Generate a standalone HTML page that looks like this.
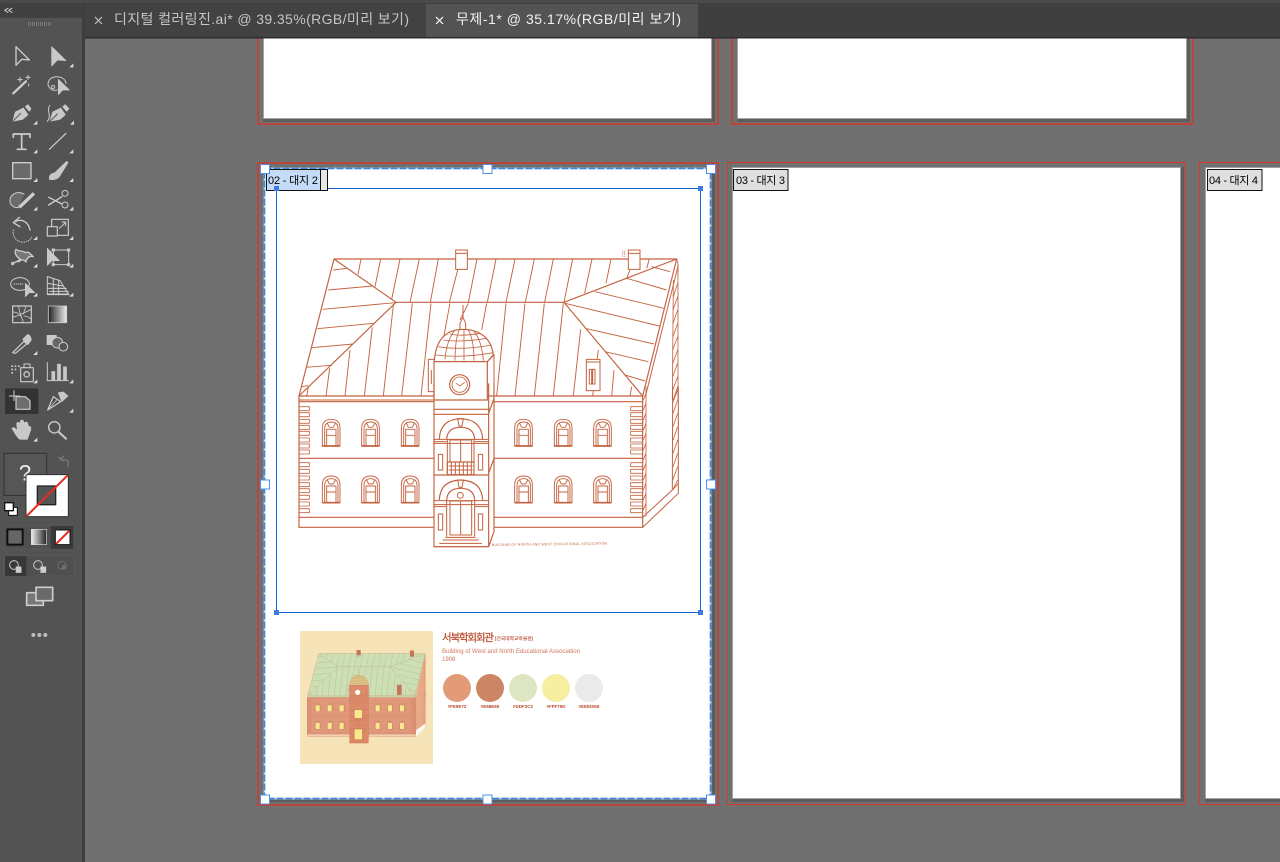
<!DOCTYPE html>
<html><head><meta charset="utf-8"><style>
html,body{margin:0;padding:0;background:#707070;width:1280px;height:862px;overflow:hidden}
svg{display:block}
text{font-family:"Liberation Sans","Noto Sans CJK KR",sans-serif}
.f{fill:var(--f,#fff)}
</style></head><body>
<svg width="1280" height="862" viewBox="0 0 1280 862" xmlns="http://www.w3.org/2000/svg">
<defs>
<linearGradient id="gr" x1="0" x2="1" y1="0" y2="0"><stop offset="0" stop-color="#222"/><stop offset="1" stop-color="#eee"/></linearGradient>
<g id="win" fill="none">
<path d="M97 168V115Q97 88 124 88Q150 88 150 115V168Z"/>
<path d="M104 168V117Q104 96 124 96Q144 96 144 117V168"/>
<path d="M110 168V118H138V168M110 136H138"/>
<path d="M97 168H150" stroke-width="5"/>
<path d="M112 100L118 112M136 100L130 112M118 112H130"/>
</g>
<g id="roof" fill="none">
<path d="M132 57H1160L1058 468H27Z" stroke-width="3.500"/>
<path d="M132 57L318 187H822L1160 57M27 468L318 187M1058 468L822 187" stroke-width="3.500"/>
<path d="M1165 75L1066 470" stroke-width="3"/>
<path d="M213 57L204 103M272 57L255 140M330 57L305 178M388 57L360 187M445 57L421 187M503 90L478 187M561 57L535 187M618 57L592 187M675 57L648 187M733 57L706 187M790 57L764 187M848 57L822 187M906 57L884 160M963 57L948 130M1020 90L1010 115M1078 57L1070 85"/>
<path d="M50 468L55 442M108 468L119 385M165 468L180 330M223 468L247 262M280 468L310 195M335 468L367 190M393 468L423 190M450 350L480 190M535 190L510 240M590 190L575 270M620 468L648 190M675 468L705 190M733 468L763 190M790 468L820 190M850 468L872 268M908 468L925 330M965 468L972 390M1020 468L1025 440"/>
<path d="M130 90L170 85M115 150L247 138M98 208L315 188M82 266L250 250M65 323L190 312M48 382L125 376M33 440L55 437"/>
<path d="M1010 115L1130 150M915 155L1122 205M825 190L1108 258M885 265L1092 312M945 335L1075 365M1005 405L1065 423M1085 80L1140 95"/>
<path class="f" d="M497 30H532V88H497ZM497 40H532" stroke-width="3"/>
<path class="f" d="M1015 30H1050V88H1015ZM1015 40H1050" stroke-width="3"/>
<path d="M998 32V50M1004 32V50" stroke-dasharray="2 2"/>
<path class="f" d="M889 358H930V452H889ZM889 366H930M898 388H905V432H898ZM908 388H915V432H908Z" stroke-width="3"/>
<path class="f" d="M415 358H435V455H415ZM424 390V432" stroke-width="3"/>
<path class="f" d="M433 362Q440 270 518 268Q600 270 610 345L592 365H433Z" stroke-width="3.500"/>
<path d="M436 345Q515 355 610 338M445 320Q515 332 605 315M460 300Q515 308 590 295M480 282Q515 290 570 280M465 358Q470 300 495 270M495 362Q495 300 508 268M522 362V268M552 362Q552 300 535 270M580 362Q575 300 552 275" stroke-width="2.500"/>
<path class="f" d="M519 195V235M510 250L519 232L527 250V268H510Z" stroke-width="3"/>
<path class="f" d="M432 365H592V480H432Z" stroke-width="3.500"/>
<path d="M592 365L612 345V470" stroke-width="3"/>
<circle cx="509" cy="434" r="30" stroke-width="3.500"/><circle cx="509" cy="434" r="23" stroke-width="2.500"/>
<path d="M498 430L510 438L524 427" stroke-width="2.500"/>
<path d="M27 468V480H432M612 468H1060" stroke-width="3"/>
<path d="M1160 57L1164 72V480M1150 120L1147 480" stroke-width="2.500"/>
<path d="M1150 170L1163 130M1149 210L1163 170M1149 250L1163 210M1149 290L1163 250M1148 330L1163 290M1148 370L1163 330M1148 410L1163 370M1148 450L1163 410M1147 490L1163 450" stroke-width="2.500"/>
</g>
<g id="lower" fill="none">
<path d="M27 18V412H432M612 412H1058V18M27 35H432M612 35H1058" stroke-width="3.500"/>
<path d="M27 205H432M612 205H1058M27 382H432M612 382H1058" stroke-width="3.500"/>
<path d="M1058 412L1165 310V-10M1058 382L1147 300M1147 300L1148 -10" stroke-width="3"/>
<path d="M1147 300L1165 280" stroke-width="3"/>
<path d="M1068 -10V380M1060 30L1068 10M1060 60L1068 40M1060 90L1068 70M1060 120L1068 100M1060 150L1068 130M1060 180L1068 160M1060 210L1068 190M1060 240L1068 220M1060 270L1068 250M1060 300L1068 280M1060 330L1068 310M1060 360L1068 340" stroke-width="2.500"/>
<path d="M1150 30L1163 -10M1149 70L1163 30M1149 110L1163 70M1149 150L1163 110M1149 190L1163 150M1149 230L1163 190M1148 270L1163 230M1148 300L1163 270" stroke-width="2.500"/>
<path d="M27 50H58V62H27M27 68H58V80H27M27 88H58V100H27M27 106H58V118H27M27 124H58V136H27M27 144H58V156H27M27 162H58V174H27M27 180H58V192H27M27 218H58V230H27M27 238H58V250H27M27 258H58V270H27M27 278H58V290H27M27 296H58V308H27M27 316H58V328H27M27 336H58V348H27M27 356H58V368H27" stroke-width="2.500"/>
<path d="M1058 50H1022V62H1058M1058 68H1022V80H1058M1058 88H1022V100H1058M1058 106H1022V118H1058M1058 124H1022V136H1058M1058 144H1022V156H1058M1058 162H1022V174H1058M1058 180H1022V192H1058M1058 218H1022V230H1058M1058 238H1022V250H1058M1058 258H1022V270H1058M1058 278H1022V290H1058M1058 296H1022V308H1058M1058 316H1022V328H1058M1058 336H1022V348H1058M1058 356H1022V368H1058" stroke-width="2.500"/>
<use href="#win"/><use href="#win" x="118"/><use href="#win" x="237"/><use href="#win" x="577"/><use href="#win" x="696"/><use href="#win" x="814"/>
<use href="#win" y="170"/><use href="#win" x="118" y="170"/><use href="#win" x="237" y="170"/><use href="#win" x="577" y="170"/><use href="#win" x="696" y="170"/><use href="#win" x="814" y="170"/>
<path d="M432 -20V470H596V-20M596 470L612 425V-20M432 58H596M432 73H596M432 255H596M596 70L612 25M596 250L612 205" stroke-width="3.500"/>
<path d="M448 148Q450 88 512 86Q575 88 578 148M470 148Q472 112 512 112Q552 112 554 148" stroke-width="3.500"/>
<path d="M503 86H520L516 108H507Z" stroke-width="3"/>
<path d="M430 148H596M430 160H596M430 155H470M554 155H596" stroke-width="3"/>
<path d="M472 250V148M552 250V148M480 215V150H545V215M512 150V215" stroke-width="3"/>
<path d="M472 216H552V254H472Z" stroke-width="3.500"/>
<path d="M476 228H548M476 240H548M484 216V254M496 216V254M508 216V254M520 216V254M532 216V254M544 216V254" stroke-width="3"/>
<path d="M445 193H458V240H445ZM565 193H578V240H565Z" stroke-width="3"/>
<path d="M448 330Q450 272 512 270Q575 272 578 330M470 330Q472 295 512 295Q552 295 554 330" stroke-width="3.500"/>
<path d="M503 270H520L516 292H507Z" stroke-width="3"/>
<circle cx="511" cy="316" r="9" stroke-width="3"/>
<path d="M430 332H596M430 344H596M430 350H470M554 350H596" stroke-width="3"/>
<path d="M470 440V330M554 440V330M480 435V333H545V435H480M512 333V435" stroke-width="3"/>
<path d="M445 372H458V420H445ZM565 372H578V420H565Z" stroke-width="3"/>
<path d="M466 442H556M458 450H566M448 460H576M432 470H596" stroke-width="3"/>
</g>
</defs>

<rect width="1280" height="862" fill="#707070"/>

<!-- artboards -->
<g>
<rect x="258" y="20" width="460" height="104" fill="none" stroke="#d0392b" stroke-width="1.500"/>
<rect x="732" y="20" width="461" height="104" fill="none" stroke="#d0392b" stroke-width="1.500"/>
<rect x="263" y="20" width="452" height="102" fill="#5d5d5d"/>
<rect x="737" y="20" width="453" height="102" fill="#5d5d5d"/>
<rect x="263" y="20" width="449" height="99" fill="#a2a2a2"/>
<rect x="737" y="20" width="450" height="99" fill="#a2a2a2"/>
<rect x="264" y="20" width="447" height="98" fill="#fff"/>
<rect x="738" y="20" width="448" height="98" fill="#fff"/>

<rect x="258" y="163" width="460" height="642" fill="none" stroke="#d0392b" stroke-width="1.500"/>
<rect x="727.500" y="162.500" width="458" height="642" fill="none" stroke="#d43a2a" stroke-width="1"/>
<rect x="1199.500" y="162.500" width="100" height="642" fill="none" stroke="#d43a2a" stroke-width="1"/>
<rect x="263" y="167" width="452" height="635" fill="#5d5d5d"/>
<rect x="732" y="167" width="452" height="635" fill="#5d5d5d"/>
<rect x="1205" y="167" width="100" height="635" fill="#5d5d5d"/>
<rect x="732" y="167" width="449" height="632" fill="#a2a2a2"/>
<rect x="1205" y="167" width="100" height="632" fill="#a2a2a2"/>
<rect x="264" y="168" width="447" height="631" fill="#fff"/>
<rect x="733" y="168" width="447" height="630" fill="#fff"/>
<rect x="1206" y="168" width="100" height="630" fill="#fff"/>
</g>

<!-- big building -->
<g transform="translate(290 240) scale(.33333)" stroke="#c4623f" stroke-width="2.800"><use href="#roof"/></g>
<g transform="translate(290 390) scale(.33333)" stroke="#c4623f" stroke-width="2.800"><use href="#lower"/></g>
<text x="492" y="546" font-size="3.400" fill="#bd5334" textLength="115" transform="rotate(-.7 492 546)">BUILDING OF NORTH AND WEST EDUCATIONAL ASSOCIATION</text>

<!-- small artwork -->
<rect x="300" y="631" width="133" height="133" fill="#f6e3b8"/>
<g transform="translate(296 640) scale(.33333)">
<path d="M68 40H388L360 172H33Z" fill="#cbe0b4"/>
<path d="M33 172H360V290H33Z" fill="#e0987a"/>
<path d="M33 283H360V290H33Z" fill="#f3d0b4"/>
<path d="M360 172L388 40V250L360 270Z" fill="#eaa986"/>
<path d="M360 272L388 250V262L360 290Z" fill="#fff"/>
<path d="M160 135H218V310H160Z" fill="#dc8c6a"/>
<path d="M160 135Q165 105 188 105Q212 105 218 135Z" fill="#dcc98c"/>
<path d="M182 30h12v16h-12zM342 32h12v18h-12zM303 135h14v30h-14z" fill="#c8765a"/>
</g>
<g transform="translate(318.700 653.300) scale(.311) translate(-334 -259)" style="--f:none" opacity=".5">
<g transform="translate(290 240) scale(.33333)" stroke="#c4694a" stroke-width="3"><use href="#roof"/></g>
<g transform="translate(290 390) scale(.33333)" stroke="#c4694a" stroke-width="3"><use href="#lower"/></g>
</g>
<g transform="translate(296 640) scale(.33333)">
<path d="M59 196h12v18h-12zM95 196h12v18h-12zM131 196h12v18h-12zM239 196h12v18h-12zM276 196h12v18h-12zM312 196h12v18h-12zM59 249h12v18h-12zM95 249h12v18h-12zM131 249h12v18h-12zM239 249h12v18h-12zM276 249h12v18h-12zM312 249h12v18h-12zM176 210h22v24h-22zM176 268h22v30h-22z" fill="#f7e98c"/>
<circle cx="185" cy="157" r="8" fill="#fff"/>
</g>
<text x="442" y="641" font-size="10.500" fill="#b9492a" stroke="#b9492a" stroke-width=".2" textLength="52">서북학회회관</text>
<text x="495" y="640" font-size="4.800" fill="#b9492a" stroke="#b9492a" stroke-width=".1" textLength="38">[건국대학교박물관]</text>
<text x="442" y="653" font-size="6.100" fill="#d0775a" textLength="138">Building of West and North Educational Association</text>
<text x="442" y="661" font-size="6.100" fill="#d0775a">1908</text>
<circle cx="457" cy="688" r="14" fill="#e39a76"/>
<circle cx="490" cy="688" r="14" fill="#cc8665"/>
<circle cx="523" cy="688" r="14" fill="#dde5c2"/>
<circle cx="556" cy="688" r="14" fill="#f7ef9f"/>
<circle cx="589" cy="688" r="14" fill="#eaeaea"/>
<g font-size="4.500" fill="#b9492a" text-anchor="middle" font-weight="bold">
<text x="457" y="708">#FE9E72</text><text x="490" y="708">#E68E65</text><text x="523" y="708">#DDF3C2</text><text x="556" y="708">#FFF79D</text><text x="589" y="708">#EEEDEB</text>
</g>

<!-- selection -->
<rect x="264.500" y="168.500" width="446" height="630" fill="none" stroke="#c9dff8" stroke-width="2"/>
<rect x="264.500" y="168.500" width="446" height="630" fill="none" stroke="#3b86e0" stroke-width="1.500" stroke-dasharray="7 2"/>
<rect x="276.500" y="188.500" width="424" height="424" fill="none" stroke="#1263d6" stroke-width="1"/>
<!-- labels -->
<rect x="320.500" y="169.500" width="7" height="21" fill="#e6e6e6" stroke="#111"/>
<rect x="266.500" y="169.500" width="54" height="21" fill="#c5dcf8" stroke="#111"/>
<text x="268" y="184" font-size="11" fill="#000" textLength="50">02 - 대지 2</text>
<rect x="733.500" y="169.500" width="54.500" height="21" fill="#e0e0e0" stroke="#111"/>
<text x="736" y="184" font-size="11" fill="#000" textLength="49">03 - 대지 3</text>
<rect x="1207.500" y="169.500" width="54.500" height="21" fill="#e0e0e0" stroke="#111"/>
<text x="1209" y="184" font-size="11" fill="#000" textLength="49">04 - 대지 4</text>
<g fill="#3c7be0">
<rect x="274" y="186" width="5" height="5"/><rect x="698" y="186" width="5" height="5"/><rect x="274" y="610" width="5" height="5"/><rect x="698" y="610" width="5" height="5"/>
</g>
<g fill="#fff" stroke="#4c90e6" stroke-width="1">
<rect x="260.500" y="164.500" width="9" height="9"/><rect x="483" y="164.500" width="9" height="9"/><rect x="706.500" y="164.500" width="9" height="9"/>
<rect x="260.500" y="480" width="9" height="9"/><rect x="706.500" y="480" width="9" height="9"/>
<rect x="260.500" y="795" width="9" height="9"/><rect x="483" y="795" width="9" height="9"/><rect x="706.500" y="795" width="9" height="9"/>
</g>

<!-- tab bar -->
<rect x="83" y="0" width="1197" height="38" fill="#3f3f3f"/>
<rect x="0" y="0" width="1280" height="3" fill="#4a4a4a"/>
<rect x="85" y="4" width="341" height="33" fill="#424242"/>
<rect x="426" y="4" width="272" height="33" fill="#535353"/>
<rect x="85" y="37" width="1195" height="1.500" fill="#2c2c2c"/>
<path d="M95 17L102 24M102 17L95 24" stroke="#c4c4c4" stroke-width="1.200"/>
<path d="M436 17L443 24M443 17L436 24" stroke="#fff" stroke-width="1.200"/>
<text x="114" y="24" font-size="14" fill="#c6c6c6" textLength="295">디지털 컬러링진.ai* @ 39.35%(RGB/미리 보기)</text>
<text x="456" y="24" font-size="14" fill="#f2f2f2" textLength="225">무제-1* @ 35.17%(RGB/미리 보기)</text>

<!-- toolbar -->
<rect x="0" y="3" width="83" height="859" fill="#535353"/>
<rect x="0" y="3" width="83" height="15" fill="#414141"/>
<rect x="82" y="3" width="3" height="859" fill="#3e3e3e"/>
<g transform="scale(.33333)" fill="none" stroke="#cdcdcd" stroke-width="4" stroke-linejoin="round" stroke-linecap="round">
<path d="M24 25L14 31L24 37M36 25L26 31L36 37" stroke-width="3"/>
<path d="M84 72H152" stroke="#8a8a8a" stroke-width="12" stroke-dasharray="2 4" stroke-linecap="butt"/>
<path d="M48 140L88 180L65 178L48 196Z"/>
<path d="M155 140L198 182L172 180L155 198Z" fill="#c8c8c8" stroke-width="2"/>
<path d="M40 280L78 244" stroke-width="7"/>
<path d="M60 232V246M53 239H67M84 226V238M78 232H90M86 252V258" stroke-width="3"/>
<path d="M172 270C150 275 138 255 148 240C160 224 195 228 198 250M155 258a5 5 0 1 0 8 6a5 5 0 1 0-8-6" stroke-width="3"/>
<path d="M175 238L208 270L188 270L175 284Z" fill="#c8c8c8" stroke-width="2"/>
<path d="M38 364L46 336L70 324L84 344L68 358Z" fill="#c8c8c8" stroke-width="2"/>
<path d="M76 320L84 314L93 326L88 334Z" fill="#c8c8c8" stroke-width="2"/>
<path d="M38 364L62 340" stroke="#535353" stroke-width="3"/>
<path d="M150 364L158 336L182 324L196 344L180 358Z" fill="#c8c8c8" stroke-width="2"/>
<path d="M188 320L196 314L207 326L200 334Z" fill="#c8c8c8" stroke-width="2"/>
<path d="M150 364L172 342" stroke="#535353" stroke-width="3"/>
<path d="M150 316C136 330 158 345 142 364" stroke-width="3"/>
<path d="M40 412V402H90V412M65 402V448M52 448H78" stroke-width="5"/>
<path d="M148 448L198 400" stroke-width="3.500"/>
<rect x="38" y="488" width="55" height="48" fill="#6a6a6a"/>
<path d="M148 538C146 525 155 520 165 518L200 484L204 488L178 530C170 540 155 540 148 538Z" fill="#c8c8c8" stroke-width="2"/>
<path d="M72 582C50 570 28 585 30 605C32 618 44 625 56 622" fill="#6c6c6c" stroke-width="3"/>
<path d="M58 622L102 580" stroke-width="10" stroke-linecap="butt"/>
<path d="M146 592L186 612M146 615L186 590" stroke-width="4"/>
<circle cx="195" cy="580" r="9" stroke-width="3"/><circle cx="195" cy="615" r="9" stroke-width="3"/>
<path d="M90 690C85 665 65 655 45 665M58 652L40 668L60 680" stroke-width="4"/>
<path d="M40 690a30 30 0 0 0 55 22" stroke-dasharray="2 5" stroke-width="3"/>
<rect x="155" y="658" width="50" height="48" stroke-width="3.500"/>
<rect x="142" y="680" width="30" height="28" fill="#535353" stroke-width="3.500"/>
<path d="M178 685L196 668M186 666H197V677" stroke-width="3"/>
<g transform="translate(0 690)">
<path d="M36 102L62 88C48 80 42 68 48 58C56 66 66 60 76 68C86 62 92 74 100 80C88 76 80 84 78 96C72 88 62 88 56 96" stroke-width="4" fill="#777"/>
<circle cx="38" cy="100" r="4" stroke-width="2.500"/>
<path d="M142 55L178 92L156 92L142 106Z" fill="#c8c8c8" stroke-width="2"/>
<rect x="160" y="60" width="46" height="44" stroke-width="3"/>
<path d="M156 56h8v8h-8zM202 56h8v8h-8zM202 100h8v8h-8zM156 100h8v8h-8z" fill="#ccc" stroke-width="1"/>
<ellipse cx="60" cy="162" rx="28" ry="19" stroke-width="3"/>
<path d="M42 162H72" stroke-dasharray="2 4" stroke-width="3"/>
<path d="M76 160L104 188L88 188L76 200Z" fill="#c8c8c8" stroke-width="2"/>
<path d="M142 140L180 152L205 192H142ZM160 145V192M176 152V192M142 160L190 168M142 175H198" stroke-width="3"/>
<path d="M155 175H198M150 184H205M142 194H208" stroke-width="3"/>
<rect x="38" y="228" width="56" height="50" stroke-width="3.500"/>
<path d="M38 262C55 258 70 250 94 238M56 228C58 250 66 262 70 278M40 246C50 246 60 252 64 260M78 228C76 240 70 248 70 252M72 258C80 258 88 262 94 268" stroke-width="2.500"/>
<rect x="145" y="228" width="55" height="50" fill="url(#gr)" stroke-width="2.500"/>
<path d="M38 368L72 334L80 342L46 370Z" stroke-width="3.500"/>
<path d="M68 328L84 344L94 330C92 316 84 310 80 316Z" fill="#c8c8c8" stroke-width="2"/>
<rect x="141" y="316" width="28" height="28" fill="#c8c8c8" stroke-width="2"/>
<circle cx="172" cy="338" r="16" fill="#666" stroke-width="3"/><circle cx="190" cy="350" r="13" fill="#535353" stroke-width="3"/>
<rect x="62" y="413" width="38" height="42" stroke-width="3.500"/>
<circle cx="80" cy="433" r="8" stroke-width="4"/>
<path d="M72 413V402H90V413" stroke-width="3"/>
<path d="M34 406h5v5h-5zM44 406h5v5h-5zM54 406h5v5h-5zM34 416h5v5h-5zM44 416h5v5h-5zM34 426h5v5h-5z" fill="#ccc" stroke="none"/>
<path d="M142 398V452H205" stroke-width="3"/>
<rect x="155" y="424" width="10" height="26" fill="#c8c8c8" stroke-width="1"/>
<rect x="172" y="402" width="10" height="48" fill="#c8c8c8" stroke-width="1"/>
<rect x="190" y="410" width="10" height="40" fill="#c8c8c8" stroke-width="1"/>
<rect x="15" y="475" width="100" height="77" rx="5" fill="#333" stroke="none"/>
<path d="M48 500H76L90 512V538H48Z" fill="#6e6e6e" stroke-width="3.500"/>
<path d="M28 498H60M42 482V512" stroke-width="3"/>
<path d="M143 540L160 500L182 515Z" stroke-width="3.500"/>
<path d="M175 488L190 486L204 498L185 515Z" fill="#c8c8c8" stroke-width="2"/>
<path d="M143 540L170 510" stroke-width="2"/>
<path d="M60 628C50 622 42 605 36 595C40 590 46 594 52 602L50 580C54 574 60 578 60 584L62 572C66 568 72 572 72 578L75 578C80 574 84 578 84 584L86 590C92 588 94 592 92 600L82 628Z" fill="#c8c8c8" stroke-width="2"/>
<circle cx="163" cy="592" r="17" stroke-width="4"/>
<path d="M176 606L198 626" stroke-width="6"/>
</g>
<g fill="#ddd" stroke="none">
<path d="M208 202L220 190V202ZM100 374L112 362V374ZM210 374L222 362V374ZM100 460L112 448V460ZM208 460L220 448V460ZM100 546L112 534V546ZM208 546L220 534V546ZM100 632L112 620V632ZM208 632L220 620V632ZM100 720L112 708V720ZM208 720L220 708V720ZM100 803L112 791V803ZM208 803L220 791V803ZM100 890L112 878V890ZM208 890L220 878V890ZM100 1065L112 1053V1065ZM100 1150L112 1138V1150ZM208 1150L220 1138V1150ZM208 1238L220 1226V1238ZM100 1325L112 1313V1325Z"/>
</g>
<g transform="translate(0 1350)">
<rect x="12" y="10" width="128" height="126" fill="#565656" stroke="#333" stroke-width="3"/>
<text x="75" y="92" font-size="66" fill="#eee" stroke="none" text-anchor="middle">?</text>
<path d="M180 30L190 18L184 30H196C206 30 208 38 202 50M176 22L190 32" stroke="#777" stroke-width="4"/>
<rect x="78" y="74" width="127" height="126" rx="3" fill="#fff" stroke="#333" stroke-width="3"/>
<rect x="112" y="108" width="55" height="56" fill="#555" stroke="#222" stroke-width="4"/>
<path d="M80 198L203 76" stroke="#e8291e" stroke-width="6" stroke-linecap="butt"/>
<rect x="26" y="172" width="26" height="24" fill="#fff" stroke="#111" stroke-width="3"/>
<rect x="14" y="158" width="26" height="24" fill="#fff" stroke="#111" stroke-width="4"/>
<rect x="12" y="228" width="208" height="69" fill="#4f4f4f" stroke="#5c5c5c" stroke-width="2"/>
<rect x="152" y="228" width="68" height="69" fill="#3a3a3a" stroke="none"/>
<rect x="22" y="238" width="46" height="46" fill="#666" stroke="#111" stroke-width="6"/>
<rect x="94" y="238" width="46" height="46" fill="url(#gr)" stroke="#ddd" stroke-width="2" transform="rotate(180 117 261)"/>
<rect x="166" y="240" width="44" height="44" fill="#fff" stroke="#111" stroke-width="3"/>
<path d="M168 282L208 242" stroke="#e8291e" stroke-width="6" stroke-linecap="butt"/>
<rect x="14" y="317" width="208" height="61" fill="#4f4f4f" stroke="#5c5c5c" stroke-width="2"/>
<rect x="15" y="318" width="64" height="60" fill="#383838" stroke="none"/>
<circle cx="42" cy="345" r="13" stroke-width="3"/><rect x="48" y="350" width="16" height="18" fill="#ccc" stroke-width="1"/>
<circle cx="114" cy="345" r="13" stroke-width="3"/><rect x="122" y="350" width="16" height="18" fill="#ccc" stroke-width="1"/>
<circle cx="186" cy="346" r="12" stroke="#707070" stroke-width="3"/><path d="M186 346h12v12h-12z" fill="#707070" stroke="none"/>
<rect x="80" y="428" width="50" height="38" fill="#777" stroke="#ccc" stroke-width="5"/>
<rect x="108" y="412" width="50" height="40" fill="#6a6a6a" stroke="#ccc" stroke-width="5"/>
<g fill="#bdbdbd" stroke="none"><circle cx="100" cy="555" r="6"/><circle cx="118" cy="555" r="6"/><circle cx="136" cy="555" r="6"/></g>
</g>
</g>
</svg>
</body></html>
